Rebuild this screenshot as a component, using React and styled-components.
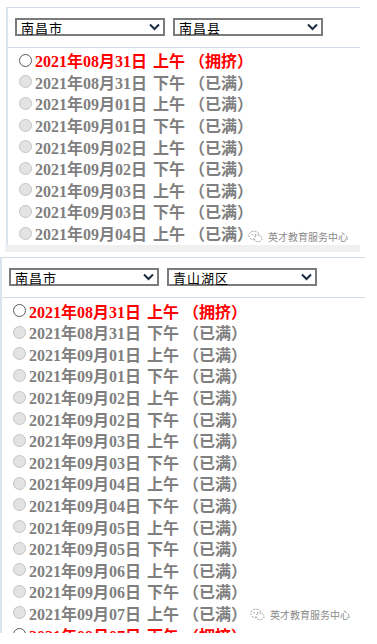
import React from "react";
import styled, { createGlobalStyle } from "styled-components";

const Global = createGlobalStyle`
  html, body { margin: 0; padding: 0; background: #ffffff; }
  body { font-family: "Liberation Serif", "Noto Sans CJK SC", serif; }
`;

const Page = styled.div`
  width: 377px;
  height: 633px;
  overflow: hidden;
  padding-top: 7px;
  box-sizing: border-box;
`;

const Panel = styled.section`
  position: relative;
  margin-left: ${(p) => p.$inset}px;
  width: ${(p) => p.$width}px;
  border-top: 1px solid #d3dde8;
  border-left: 2px solid #dbe4ee;
  box-sizing: border-box;
`;

const SelectBar = styled.div`
  display: flex;
  gap: 8px;
  padding: 10px 0 11px 7px;
  border-bottom: 1px solid #d3dde8;
`;

const FakeSelect = styled.div`
  width: ${(p) => p.$w}px;
  height: 18px;
  box-sizing: border-box;
  border: 2px solid #7b7b7b;
  display: flex;
  align-items: center;
  justify-content: space-between;
  padding: 0 3px 0 4px;
  font-family: "Noto Sans CJK SC", sans-serif;
  font-size: 13px;
  letter-spacing: 1px;
  color: #000;
  line-height: 1;
`;

const Chevron = styled.svg`
  width: 11px;
  height: 8px;
  flex: none;
`;

const SlotList = styled.ul`
  list-style: none;
  margin: 0;
  padding: 1.5px 0 1.5px 11px;
`;

const Slot = styled.li`
  display: flex;
  align-items: center;
  height: 21.6px;
  white-space: pre;
  font-family: "Liberation Serif", "Noto Sans CJK SC", serif;
  font-weight: 700;
  font-size: 16px;
  color: ${(p) => (p.$open ? "#ff0000" : "#7f7f7f")};
`;

const Radio = styled.span`
  width: 13px;
  height: 13px;
  box-sizing: border-box;
  border-radius: 50%;
  margin-right: 3px;
  flex: none;
  border: 1px solid ${(p) => (p.$open ? "#5a5a5a" : "#c4c4c4")};
  background: ${(p) => (p.$open ? "#ffffff" : "#e3e3e3")};
`;

const Period = styled.span`
  margin-left: 6px;
`;

const State = styled.span`
  margin-left: 4px;
`;

const ScrollStub = styled.div`
  margin: 0 0 5px 5px;
  width: 355px;
  height: 7px;
  background: #f0f0f0;
`;

const Watermark = styled.div`
  position: absolute;
  left: ${(p) => p.$left}px;
  top: ${(p) => p.$top}px;
  display: flex;
  align-items: center;
  gap: 5px;
  font-family: "Noto Sans CJK SC", sans-serif;
  font-size: 10px;
  color: #8a8a8a;
  background: rgba(255, 255, 255, 0.6);
  padding: 0 2px;
`;

const MarkIcon = styled.svg`
  width: 15px;
  height: 13px;
`;

function Select({ w, label }) {
  return (
    <FakeSelect $w={w}>
      <span>{label}</span>
      <Chevron viewBox="0 0 11 8">
        <polyline points="1,1.5 5.5,6 10,1.5" fill="none" stroke="#1b2a3e" strokeWidth="2" />
      </Chevron>
    </FakeSelect>
  );
}

function Mark({ left, top }) {
  return (
    <Watermark $left={left} $top={top}>
      <MarkIcon viewBox="0 0 15 13">
        <ellipse cx="6" cy="5.5" rx="5.2" ry="4.3" fill="none" stroke="#9a9a9a" strokeWidth="1" strokeDasharray="2 1.2" />
        <ellipse cx="10" cy="8.5" rx="4" ry="3.3" fill="#fff" stroke="#9a9a9a" strokeWidth="1" strokeDasharray="2 1.2" />
        <circle cx="4.3" cy="4.8" r="0.7" fill="#9a9a9a" />
        <circle cx="7.6" cy="4.8" r="0.7" fill="#9a9a9a" />
      </MarkIcon>
      <span>英才教育服务中心</span>
    </Watermark>
  );
}

function SlotRow({ date, half, open }) {
  return (
    <Slot $open={open}>
      <Radio $open={open} />
      <span>{date}</span>
      <Period>{half}</Period>
      <State>{open ? "（拥挤）" : "（已满）"}</State>
    </Slot>
  );
}

const days1 = [
  ["2021年08月31日", "上午", true],
  ["2021年08月31日", "下午", false],
  ["2021年09月01日", "上午", false],
  ["2021年09月01日", "下午", false],
  ["2021年09月02日", "上午", false],
  ["2021年09月02日", "下午", false],
  ["2021年09月03日", "上午", false],
  ["2021年09月03日", "下午", false],
  ["2021年09月04日", "上午", false],
];

const days2 = [
  ["2021年08月31日", "上午", true],
  ["2021年08月31日", "下午", false],
  ["2021年09月01日", "上午", false],
  ["2021年09月01日", "下午", false],
  ["2021年09月02日", "上午", false],
  ["2021年09月02日", "下午", false],
  ["2021年09月03日", "上午", false],
  ["2021年09月03日", "下午", false],
  ["2021年09月04日", "上午", false],
  ["2021年09月04日", "下午", false],
  ["2021年09月05日", "上午", false],
  ["2021年09月05日", "下午", false],
  ["2021年09月06日", "上午", false],
  ["2021年09月06日", "下午", false],
  ["2021年09月07日", "上午", false],
  ["2021年09月07日", "下午", true],
];

export default function App() {
  return (
    <>
      <Global />
      <Page>
        <Panel $inset={6} $width={354}>
          <SelectBar>
            <Select w={150} label="南昌市" />
            <Select w={150} label="南昌县" />
          </SelectBar>
          <SlotList>
            {days1.map(([d, h, o], i) => (
              <SlotRow key={i} date={d} half={h} open={o} />
            ))}
          </SlotList>
          <Mark left={238} top={221} />
        </Panel>
        <ScrollStub />
        <Panel $inset={0} $width={365}>
          <SelectBar>
            <Select w={150} label="南昌市" />
            <Select w={150} label="青山湖区" />
          </SelectBar>
          <SlotList>
            {days2.map(([d, h, o], i) => (
              <SlotRow key={i} date={d} half={h} open={o} />
            ))}
          </SlotList>
          <Mark left={246} top={349} />
        </Panel>
      </Page>
    </>
  );
}
